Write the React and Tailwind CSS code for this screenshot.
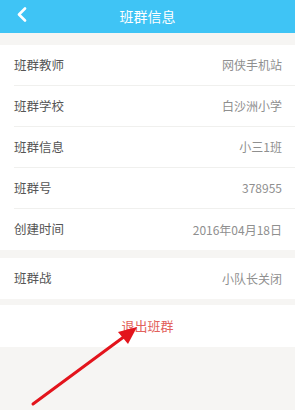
import React from "react";

const font = { fontFamily: '"Noto Sans CJK SC", "Noto Sans", Roboto, sans-serif' };

function Row({ label, value, divider = true }) {
  return (
    <div className="pl-[14px]">
      <div className={`flex h-[41px] items-center justify-between pr-[13px] ${divider ? "border-b border-[#f0f0ee]" : ""}`}>
        <span className="text-[12.5px] text-[#555555]">{label}</span>
        <span className="text-[12px] text-[#8f8f8f]">{value}</span>
      </div>
    </div>
  );
}

export default function App() {
  return (
    <div className="relative h-[410px] w-[295px] overflow-hidden bg-[#f6f5f3]" style={font}>
      <div className="relative flex h-[33px] items-center justify-center bg-[#3fc4f5]">
        <svg className="absolute left-[16px] top-[7px]" width="12" height="15" viewBox="0 0 12 15">
          <path d="M9 1.5 L3 7.5 L9 13.5" fill="none" stroke="#ffffff" strokeWidth="2.6" strokeLinecap="round" strokeLinejoin="round" />
        </svg>
        <span className="text-[14px] text-white">班群信息</span>
      </div>
      <div className="h-[12px]" />
      <div className="bg-white">
        <Row label="班群教师" value="网侠手机站" />
        <Row label="班群学校" value="白沙洲小学" />
        <Row label="班群信息" value="小三1班" />
        <Row label="班群号" value="378955" />
        <Row label="创建时间" value="2016年04月18日" divider={false} />
      </div>
      <div className="h-[8px]" />
      <div className="bg-white">
        <Row label="班群战" value="小队长关闭" divider={false} />
      </div>
      <div className="h-[6px]" />
      <div className="flex h-[42px] items-center justify-center bg-white">
        <span className="text-[13px] text-[#e2625c]">退出班群</span>
      </div>
      <svg className="absolute left-0 top-0" width="295" height="410" viewBox="0 0 295 410">
        <line x1="33" y1="404" x2="125" y2="336" stroke="#e3141c" strokeWidth="3" strokeLinecap="round" />
        <polygon points="137,327 118,332 128,344" fill="#e3141c" />
      </svg>
    </div>
  );
}
